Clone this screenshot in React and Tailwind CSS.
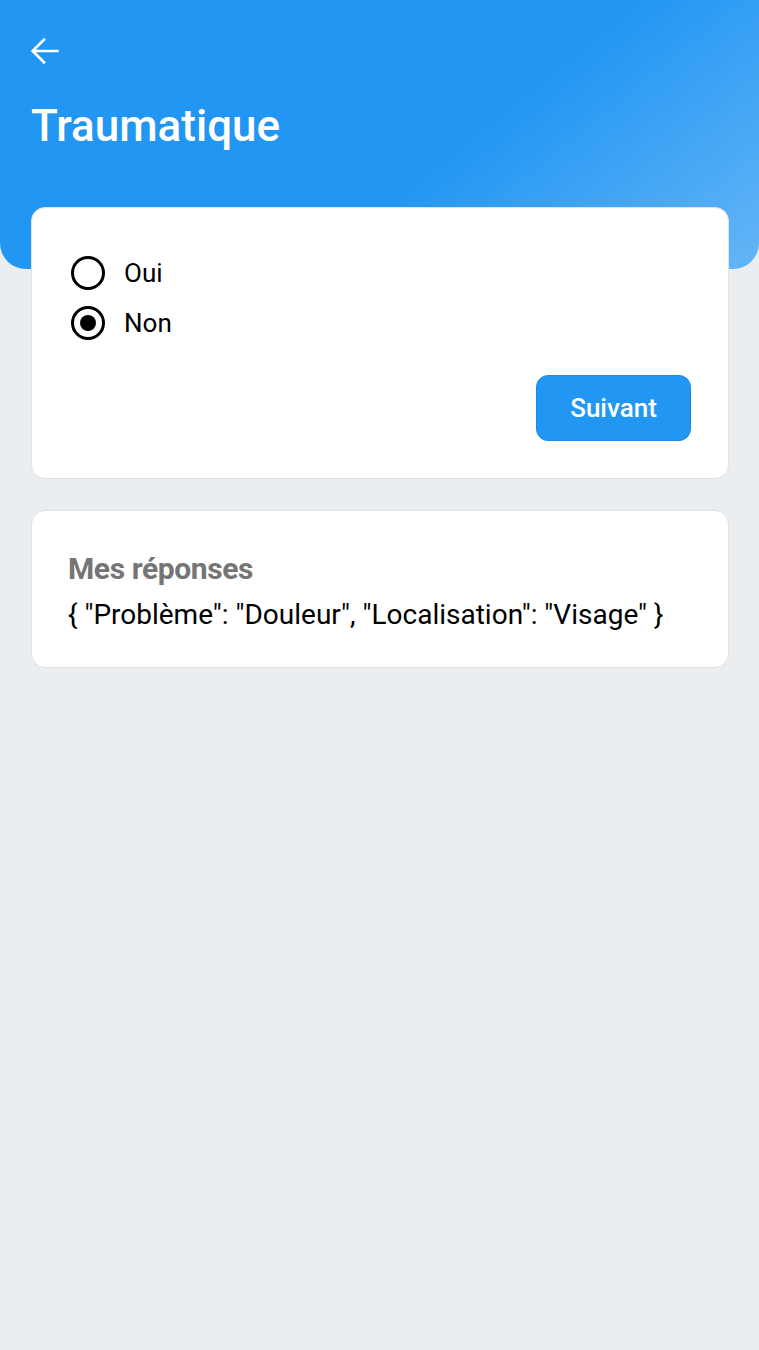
import React, { useState } from "react";

const options = ["Oui", "Non"];

const Radio = ({ checked }) => (
  <span className="flex h-[34px] w-[34px] items-center justify-center rounded-full border-[3px] border-black">
    {checked && <span className="h-[16px] w-[16px] rounded-full bg-black" />}
  </span>
);

export default function App() {
  const [answer, setAnswer] = useState("Non");

  return (
    <div className="min-h-[1350px] bg-[#ebeef1] font-['Roboto',sans-serif] text-black">
      {/* header */}
      <div className="h-[269px] rounded-b-[26px] bg-[linear-gradient(141deg,#2196f3_0%,#2196f3_58%,#64b5f6_100%)] pl-[31px] pr-[30px] pt-[31px]">
        <button className="-ml-[7px] flex h-[40px] w-[40px] items-center justify-center text-white">
          <svg width="40" height="40" viewBox="0 0 24 24" fill="none" stroke="currentColor" strokeWidth="1.6" strokeLinecap="square">
            <path d="M20 12H5.5M12 5.2 5.2 12l6.8 6.8" />
          </svg>
        </button>
        <h1 className="mt-[33px] text-[44px] font-medium leading-none text-white">Traumatique</h1>
      </div>

      <div className="-mt-[62px] flex flex-col gap-[31px] pl-[31px] pr-[30px]">
        {/* question card */}
        <div className="rounded-[14px] border border-[#e2e2e2] bg-white pb-[37px] pl-[39px] pr-[37px] pt-[48px]">
          <div className="flex flex-col gap-[16px]">
            {options.map((o) => (
              <label key={o} className="flex cursor-pointer items-center gap-[19px]" onClick={() => setAnswer(o)}>
                <Radio checked={answer === o} />
                <span className="text-[26px] leading-none">{o}</span>
              </label>
            ))}
          </div>
          <div className="mt-[35px] flex justify-end">
            <button className="h-[66px] w-[155px] rounded-[12px] border border-[#1e88e5] bg-[#2196f3] text-[26px] font-medium text-white">
              Suivant
            </button>
          </div>
        </div>

        {/* answers card */}
        <div className="rounded-[14px] border border-[#e2e2e2] bg-white px-[36px] pb-[33px] pt-[38px]">
          <h2 className="text-[30px] font-bold leading-[40px] tracking-[-0.4px] text-[#757575]">Mes réponses</h2>
          <p className="mt-[7px] text-[28px] leading-[38px]">
            {'{ "Problème": "Douleur", "Localisation": "Visage" }'}
          </p>
        </div>
      </div>
    </div>
  );
}
